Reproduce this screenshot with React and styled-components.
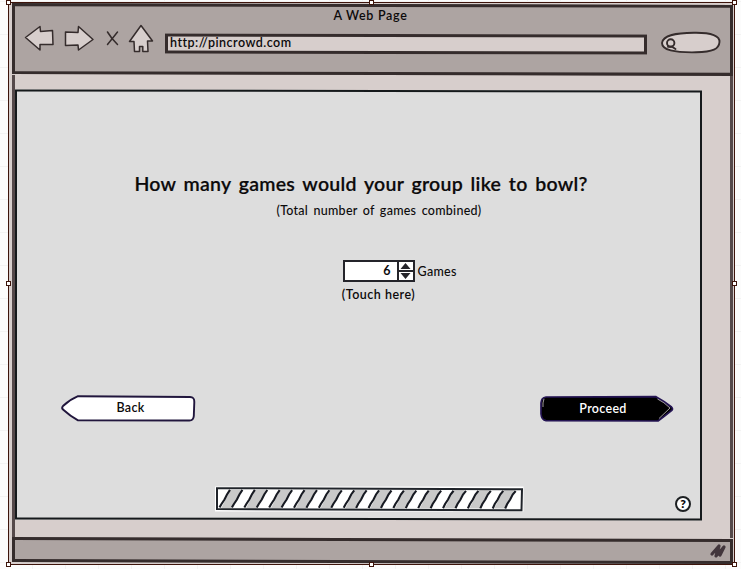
import React from 'react';
import styled, { createGlobalStyle, css } from 'styled-components';

const INK = '#352c2c';
const CHROME = '#ada4a2';
const PAPER = '#d7cecc';

const GlobalStyle = createGlobalStyle`
  * { box-sizing: border-box; }
  body { margin: 0; }
  svg { display: block; overflow: visible; }
`;

const Canvas = styled.main`
  width: 741px;
  height: 569px;
  overflow: hidden;
  padding: 2px 0 0 8px;
  background-color: #fcfcfc;
  background-image:
    linear-gradient(90deg, #f3f3f3 1px, transparent 1px),
    linear-gradient(#f3f3f3 1px, transparent 1px);
  background-size: 33px 33px;
  background-position: 32px 0, 0 1px;
  font-family: Lato, "Open Sans", sans-serif;
  font-weight: 600;
  color: #0c0a0b;
`;

const Selection = styled.div`
  position: relative;
  width: 727px;
  height: 563px;
  padding: 1px 1px 1px 3px;
  border: 1px solid #3d140b;
  background: ${PAPER};
`;

const Handle = styled.i`
  position: absolute;
  left: ${p => p.$x}px;
  top: ${p => p.$y}px;
  width: 5px;
  height: 5px;
  background: #fff;
  border: 1px solid #3d140b;
`;

const Browser = styled.section`
  display: flex;
  flex-direction: column;
  width: 721px;
  height: 559px;
`;

/* A slightly tilted outline drawn behind the content of its owner. */
const sketched = (width, fill, tilt, color = INK) => css`
  position: relative;
  isolation: isolate;
  &::before {
    content: "";
    position: absolute;
    inset: 0;
    z-index: -1;
    border: ${width}px solid ${color};
    background: ${fill};
    transform: skewY(${tilt}deg);
  }
`;

const Header = styled.header`
  ${sketched(3, CHROME, 0.14)}
  height: 71px;
  padding: 3px 9px 0 10px;
`;

const PageTitle = styled.div`
  height: 17px;
  padding-right: 5px;
  text-align: center;
  font-size: 12.5px;
  line-height: 17px;
  letter-spacing: 0.7px;
`;

const Toolbar = styled.div`
  display: flex;
  align-items: flex-start;
  padding-left: 3px;
`;

const NavIcons = styled.svg`
  flex: none;
  width: 130px;
  height: 32px;
`;

const Address = styled.div`
  ${sketched(3, PAPER, 0.14)}
  flex: none;
  width: 482px;
  height: 20px;
  margin: 10px 0 0 10px;
  padding-left: 5px;
  font-size: 12.5px;
  line-height: 18px;
  letter-spacing: 0.48px;
`;

const SearchIcon = styled.svg`
  flex: none;
  width: 60px;
  height: 24px;
  margin: 7px 0 0 14px;
`;

const Body = styled.div`
  flex: 1;
  padding: 15px 0 0 4px;
  border: solid #55494a;
  border-width: 0 3px;
`;

const Panel = styled.article`
  ${sketched(2, '#dddddd', 0.1, '#15191b')}
  display: flex;
  flex-direction: column;
  align-items: center;
  width: 687px;
  height: 430px;
  margin-left: -4px;
`;

const Question = styled.h1`
  margin: 78px 0 0 5px;
  height: 31px;
  font-size: 19.5px;
  line-height: 31px;
  font-weight: 600;
  letter-spacing: 0.27px;
  word-spacing: 2.5px;
  white-space: nowrap;
  -webkit-text-stroke: 0.2px #0c0a0b;
`;

const Hint = styled.p`
  margin: 3px 0 0 41px;
  font-weight: 500;
  font-size: 12.5px;
  line-height: 18px;
  letter-spacing: 0.26px;
  word-spacing: 2px;
  white-space: nowrap;
`;

const Stepper = styled.div`
  display: flex;
  align-items: center;
  width: 120px;
  height: 22px;
  margin: 40px 0 0 88px;
`;

const Field = styled.div`
  display: flex;
  width: 72px;
  height: 22px;
  border: 2px solid #24242a;
  background: #fff;
`;

const Value = styled.span`
  width: 54px;
  padding-right: 6px;
  text-align: right;
  font-size: 12.5px;
  line-height: 18px;
  font-weight: 700;
`;

const Spin = styled.svg`
  width: 16px;
  height: 18px;
`;

const Unit = styled.span`
  margin-left: 3px;
  padding-top: 1px;
  font-weight: 500;
  font-size: 12.5px;
  line-height: 20px;
  letter-spacing: 0.3px;
`;

const TouchHint = styled.p`
  margin: 3px 0 0 40px;
  font-size: 12.5px;
  line-height: 20px;
  font-weight: 600;
  letter-spacing: 0.5px;
  white-space: nowrap;
`;

const Actions = styled.nav`
  display: flex;
  justify-content: space-between;
  width: 613px;
  margin: 90px 0 0 17px;
`;

const ArrowButton = styled.button`
  display: grid;
  width: 134px;
  height: 27px;
  padding: 0;
  border: 0;
  background: none;
  color: ${p => (p.$dark ? '#fff' : '#0c0a0b')};
  font: 600 12.5px/26px Lato, "Open Sans", sans-serif;
  letter-spacing: 0.3px;
  > * { grid-area: 1 / 1; }
  > span { padding: ${p => (p.$dark ? '1px 7px 0 0' : '0 0 0 6px')}; }
`;

const Footline = styled.div`
  display: flex;
  width: 100%;
  margin-top: 65px;
  padding-left: 201px;
`;

const Progress = styled.svg`
  flex: none;
  width: 308px;
  height: 26px;
`;

const Help = styled.span`
  width: 16px;
  height: 16px;
  margin: 9px 0 0 151px;
  border: 2px solid #1d2023;
  border-radius: 50%;
  background: #fff;
  text-align: center;
  font-size: 12px;
  line-height: 12px;
  font-weight: 800;
`;

const StatusBar = styled.footer`
  ${sketched(3, CHROME, 0.16)}
  display: flex;
  justify-content: flex-end;
  height: 25px;
  padding: 5px 7px 0 0;
`;

const HANDLES = [
  [-3, -3], [360, -3], [723, -3],
  [-3, 278], [723, 278],
  [-3, 559], [360, 559], [723, 559],
];

function Navigation() {
  return (
    <NavIcons viewBox="25 24 130 32" fill={PAPER} stroke={INK} strokeWidth="1.5" strokeLinejoin="round" strokeLinecap="round">
      <path d="M25.5 37.5 L40 26.5 L40.5 31.5 L52.5 30.5 L53 44.5 L40 44.5 L40 50 Z" />
      <path d="M65.5 32 L78 32.5 L78.5 26.5 L93 39.5 L78.5 50 L78 45 L65.5 45.5 Z" />
      <path d="M107.5 32 Q111 38 117.5 44.5 M117.5 32 L107.5 44.5" fill="none" />
      <path d="M141 25.5 L152.5 41 H147.5 L148 51.5 H142.8 V46.5 H139.5 V51.5 H134.5 L134 41.5 H129.5 Z" />
    </NavIcons>
  );
}

function Search() {
  return (
    <SearchIcon viewBox="661 31 60 24" fill="none" stroke={INK} strokeWidth="1.9" strokeLinecap="round">
      <path d="M662 43 C663 35 676 33 694 32.8 C712 32.5 720 36 719.5 42 C719 49 713 52 696 52.3 C674 52.7 662 50 662 43 Z" fill={PAPER} />
      <circle cx="670.7" cy="43" r="3.7" />
      <path d="M668 46.8 H672 L675.5 49" />
    </SearchIcon>
  );
}

function Hatching() {
  const slants = Array.from({ length: 24 }, (_, i) => 13 + i * 12.42);
  return (
    <Progress viewBox="0 0 308 26">
      <path d="M-1 -.5 H307.5 V24.5 H-1 Z" fill="#fff" />
      {slants.map((x, i) => (
        i % 2 === 0 && <path key={x} d={`M${x + 1.5} 3 H${x + 12} L${x + 2.5} 21.5 H${x - 8} Z`} fill="#c9c9c9" />
      ))}
      {slants.map(x => (
        <path key={x} d={`M${x + 1} ${2.8 + x * 0.004} L${x - 2} 7.5 L${x - 4.5} 12.5 L${x - 7.5} 17 L${x - 9.5} ${20.3 + x * 0.004}`} fill="none" stroke="#171a22" strokeWidth="2.1" />
      ))}
      <path d="M1 1.2 L306 2.2 L305.5 23.3 L1 22 Z" fill="none" stroke="#20242a" strokeWidth="2" />
    </Progress>
  );
}

export default function App() {
  return (
    <Canvas>
      <GlobalStyle />
      <Selection>
        <Browser>
          <Header>
            <PageTitle>A Web Page</PageTitle>
            <Toolbar>
              <Navigation />
              <Address>http://pincrowd.com</Address>
              <Search />
            </Toolbar>
          </Header>
          <Body>
            <Panel>
              <Question>How many games would your group like to bowl?</Question>
              <Hint>(Total number of games combined)</Hint>
              <Stepper>
                <Field>
                  <Value>6</Value>
                  <Spin viewBox="0 0 16 18" fill="#24242a">
                    <path d="M0 0 H2 V18 H0 Z M0 8 H16 V10 H0 Z M8.5 1 L13.5 7 H3.5 Z M3.5 11 H13.5 L8.5 17 Z" />
                  </Spin>
                </Field>
                <Unit>Games</Unit>
              </Stepper>
              <TouchHint>(Touch here)</TouchHint>
              <Actions>
                <ArrowButton>
                  <svg width="134" height="27" viewBox="0 0 134 27">
                    <path d="M17 1.2 L129 2 Q133.5 2 133.3 7 L132.8 21 Q132.5 25.7 128 25.5 L17 25.3 Q9 21 2 14.5 Q.3 13 2 11 Q9 4.5 17 1.2 Z" fill="#fff" stroke="#21163d" strokeWidth="1.9" />
                  </svg>
                  <span>Back</span>
                </ArrowButton>
                <ArrowButton $dark>
                  <svg width="134" height="27" viewBox="0 0 134 27">
                    <path d="M6 2 L116 1.7 Q124 6 131.5 12 Q133.5 14 131.5 15.7 Q125 21 118 26 L6 25.7 Q1.5 25 1 19 L1 8 Q1.3 2.5 6 2 Z" fill="#000" stroke="#251554" strokeWidth="1.7" />
                    <path d="M117.5 4 Q124 7 130 13 L119 23.5 M4 3.8 Q2.5 8 3 12" fill="none" stroke="#c9c1c5" strokeWidth=".8" />
                  </svg>
                  <span>Proceed</span>
                </ArrowButton>
              </Actions>
              <Footline>
                <Hatching />
                <Help>?</Help>
              </Footline>
            </Panel>
          </Body>
          <StatusBar>
            <svg width="16" height="15" viewBox="0 0 16 15" fill="none" stroke="#42363c" strokeWidth="3.2" strokeLinejoin="round" strokeLinecap="round">
              <path d="M2 11 L9 3 L6 13 L14 4 L10 12" />
            </svg>
          </StatusBar>
        </Browser>
        {HANDLES.map(([x, y]) => <Handle key={`${x},${y}`} $x={x} $y={y} />)}
      </Selection>
    </Canvas>
  );
}
